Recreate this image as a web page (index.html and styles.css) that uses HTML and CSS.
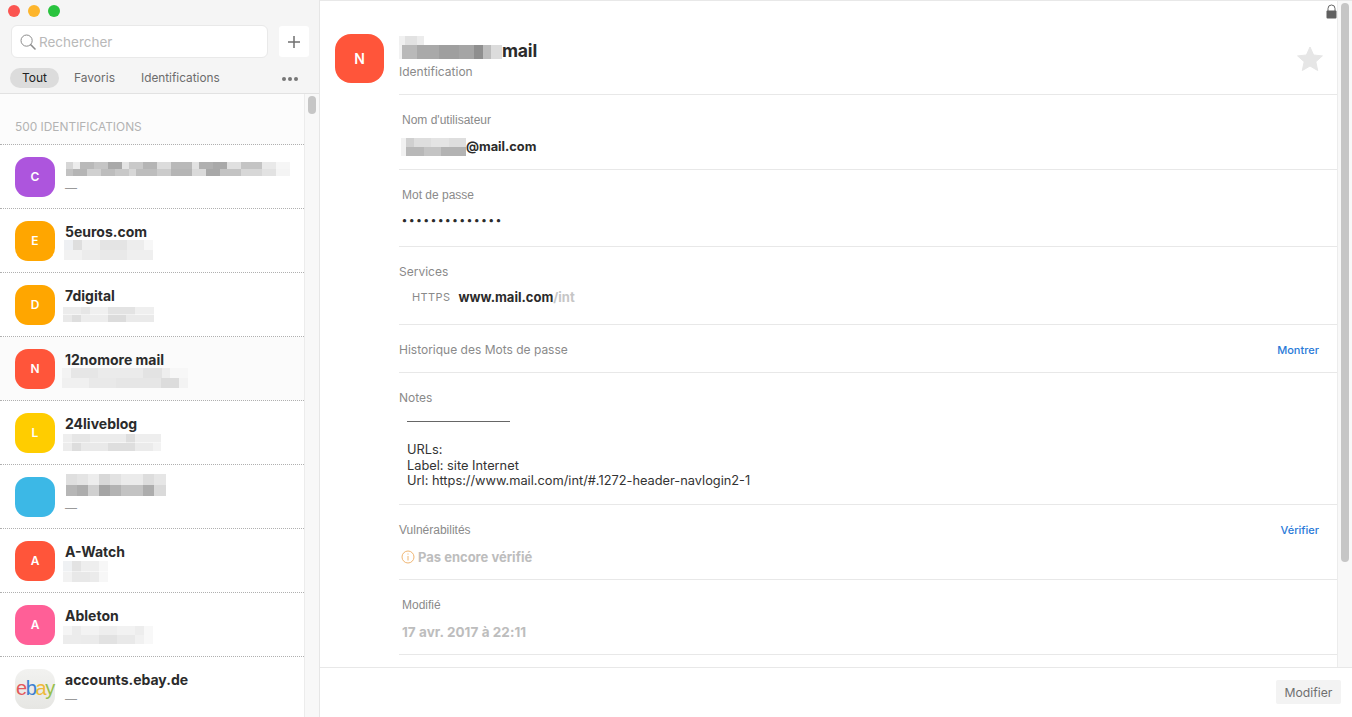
FILE: index.html
```html
<!DOCTYPE html>
<html lang="fr">

<head>
    <meta charset="UTF-8">
    <meta name="viewport" content="width=device-width, initial-scale=1.0">
    <title>Identifications</title>
    <link rel="stylesheet" href="styles.css">
</head>

<body>
    <div class="app">
        <div class="sidebar">
            <div class="toolbar">
                <div class="lights">
                    <span class="light red"></span>
                    <span class="light yellow"></span>
                    <span class="light green"></span>
                </div>
                <div class="search-row">
                    <div class="search">
                        <svg width="16" height="16" viewBox="0 0 16 16" fill="none" stroke="#8c8c8c">
                            <circle cx="6.6" cy="6.6" r="5.6" stroke-width="1" />
                            <path d="M10.8 10.8 L15 15" stroke-width="1.6" stroke-linecap="round" />
                        </svg>
                        <span>Rechercher</span>
                    </div>
                    <div class="add">
                        <svg width="12" height="12" viewBox="0 0 12 12" stroke="#707070" stroke-width="1.5">
                            <path d="M6 0 V12 M0 6 H12" />
                        </svg>
                    </div>
                </div>
                <div class="tabs">
                    <span class="tab active">Tout</span>
                    <span class="tab tab-fav">Favoris</span>
                    <span class="tab tab-ids">Identifications</span>
                    <span class="more"><i></i><i></i><i></i></span>
                </div>
            </div>
            <div class="list-wrap">
                <div class="list">
                    <div class="list-head">500 IDENTIFICATIONS</div>

                    <div class="row">
                        <div class="badge purple">C</div>
                        <div class="row-text">
                            <div class="mosaic m-first"></div>
                            <div class="dash">—</div>
                        </div>
                    </div>
                    <div class="row">
                        <div class="badge orange">E</div>
                        <div class="row-text">
                            <div class="row-title">5euros.com</div>
                            <div class="mosaic m-euros"></div>
                        </div>
                    </div>
                    <div class="row">
                        <div class="badge orange">D</div>
                        <div class="row-text">
                            <div class="row-title">7digital</div>
                            <div class="mosaic m-digital"></div>
                        </div>
                    </div>
                    <div class="row selected">
                        <div class="badge red-orange">N</div>
                        <div class="row-text">
                            <div class="row-title">12nomore mail</div>
                            <div class="mosaic m-nomore"></div>
                        </div>
                    </div>
                    <div class="row">
                        <div class="badge yellow-badge">L</div>
                        <div class="row-text">
                            <div class="row-title">24liveblog</div>
                            <div class="mosaic m-live"></div>
                        </div>
                    </div>
                    <div class="row">
                        <div class="badge blue"></div>
                        <div class="row-text">
                            <div class="mosaic m-blank"></div>
                            <div class="dash dash-low">—</div>
                        </div>
                    </div>
                    <div class="row">
                        <div class="badge red-orange">A</div>
                        <div class="row-text">
                            <div class="row-title">A-Watch</div>
                            <div class="mosaic m-watch"></div>
                        </div>
                    </div>
                    <div class="row">
                        <div class="badge pink">A</div>
                        <div class="row-text">
                            <div class="row-title">Ableton</div>
                            <div class="mosaic m-ableton"></div>
                        </div>
                    </div>
                    <div class="row">
                        <div class="badge ebay"><span class="e">e</span><span class="b">b</span><span class="a">a</span><span class="y">y</span></div>
                        <div class="row-text">
                            <div class="row-title">accounts.ebay.de</div>
                            <div class="dash">—</div>
                        </div>
                    </div>
                </div>
                <div class="track list-track"><div class="thumb list-thumb"></div></div>
            </div>
        </div>

        <div class="detail">
            <svg class="lock" width="11" height="15" viewBox="0 0 11 15">
                <path d="M2 7 V4.5 a3.5 3.5 0 0 1 7 0 V7" fill="none" stroke="#666" stroke-width="1" />
                <rect x="0.5" y="6.5" width="10" height="8" rx="1" fill="#5f5f5f" />
            </svg>
            <div class="detail-body">
                <div class="avatar-col">
                    <div class="badge badge-big red-orange">N</div>
                </div>
                <div class="fields">
                    <div class="head">
                        <div>
                            <div class="head-title">
                                <div class="mosaic m-title"></div>
                                <span>mail</span>
                            </div>
                            <div class="head-sub">Identification</div>
                        </div>
                        <svg class="star" width="26" height="26" viewBox="0 0 26 26">
                            <path d="M13 1 L16.6 9 L25.4 9.9 L18.8 15.8 L20.7 24.5 L13 20 L5.3 24.5 L7.2 15.8 L0.6 9.9 L9.4 9 Z" fill="#e6e6e6" stroke="#e6e6e6" stroke-linejoin="round" />
                        </svg>
                    </div>

                    <div class="field field-user inset">
                        <div class="label">Nom d'utilisateur</div>
                        <div class="value user-value">
                            <div class="mosaic m-user"></div>
                            <span>@mail.com</span>
                        </div>
                    </div>
                    <div class="field field-pass inset">
                        <div class="label">Mot de passe</div>
                        <div class="value dots">••••••••••••••</div>
                    </div>
                    <div class="field field-services">
                        <div class="label">Services</div>
                        <div class="value service">
                            <span class="proto">HTTPS</span>
                            <span>www.mail.com<span class="path">/int</span></span>
                        </div>
                    </div>
                    <div class="field field-history">
                        <div class="label-row">
                            <div class="label">Historique des Mots de passe</div>
                            <a class="link">Montrer</a>
                        </div>
                    </div>
                    <div class="field field-notes">
                        <div class="label">Notes</div>
                        <div class="note-rule"></div>
                        <div class="note">URLs:<br>Label: site Internet<br>Url: https://www.mail.com/int/#.1272-header-navlogin2-1</div>
                    </div>
                    <div class="field field-vuln">
                        <div class="label-row">
                            <div class="label">Vulnérabilités</div>
                            <a class="link">Vérifier</a>
                        </div>
                        <div class="value muted vuln">
                            <svg width="14" height="14" viewBox="0 0 14 14" fill="none" stroke="#f0b673">
                                <circle cx="7" cy="7" r="6" />
                                <path d="M7 3.5 V4.6 M7 6 V10.5" />
                            </svg>
                            Pas encore vérifié
                        </div>
                    </div>
                    <div class="field field-mod inset">
                        <div class="label">Modifié</div>
                        <div class="value muted mod-value">17 avr. 2017 à 22:11</div>
                    </div>
                </div>
                <div class="track detail-track"><div class="thumb detail-thumb"></div></div>
            </div>
            <div class="footer">
                <button class="edit">Modifier</button>
            </div>
        </div>
    </div>
</body>

</html>
```

FILE: styles.css
```css
* {
    box-sizing: border-box;
}

html,
body {
    margin: 0;
    height: 100%;
    overflow: hidden;
    background: #fff;
    font-family: Inter, "Liberation Sans", sans-serif;
    color: #2b2b2b;
}

.app {
    display: flex;
    height: 100vh;
}

/* sidebar */
.sidebar {
    width: 320px;
    flex: none;
    display: flex;
    flex-direction: column;
    border-right: 1px solid #e6e6e6;
}

.toolbar {
    height: 94px;
    flex: none;
    background: #f5f5f5;
    border-bottom: 1px solid #e2e2e2;
}

.lights {
    display: flex;
    gap: 8px;
    padding: 5px 0 0 8px;
}

.light {
    width: 12px;
    height: 12px;
    border-radius: 50%;
}

.light.red {
    background: #fb5551;
}

.light.yellow {
    background: #fdb52c;
}

.light.green {
    background: #29c33e;
}

.search-row {
    display: flex;
    gap: 11px;
    padding: 8px 0 0 11px;
}

.search {
    width: 257px;
    height: 33px;
    background: #fff;
    border: 1px solid #e9e9e9;
    border-radius: 6px;
    display: flex;
    align-items: center;
    gap: 3px;
    padding-left: 8px;
    font-size: 13.5px;
    color: #b9b9b9;
}

.add {
    width: 30px;
    height: 31px;
    margin-top: 1px;
    background: #fff;
    border-radius: 3px;
    display: flex;
    align-items: center;
    justify-content: center;
}

.tabs {
    display: flex;
    align-items: center;
    height: 20px;
    margin-top: 10px;
    padding-left: 10px;
    font-size: 12px;
    color: #6c6c6c;
}

.tab {
    line-height: 20px;
}

.tab.active {
    width: 49px;
    text-align: center;
    background: #dcdcdc;
    border-radius: 10px;
    color: #222;
}

.tab-fav {
    margin-left: 15px;
}

.tab-ids {
    margin-left: 26px;
    font-size: 11.8px;
}

.more {
    display: flex;
    gap: 2px;
    margin-left: 62px;
    margin-top: 2px;
}

.more i {
    width: 4px;
    height: 4px;
    border-radius: 50%;
    background: #777;
}

.list-wrap {
    flex: 1;
    display: flex;
    min-height: 0;
}

.list {
    width: 304px;
    flex: none;
    overflow: hidden;
    background: #fff;
}

.list-head {
    height: 51px;
    padding: 26px 0 0 15px;
    line-height: 14px;
    font-size: 11.9px;
    color: #b3b3b3;
    border-bottom: 1px dotted #b0b0b0;
    background: #fcfcfc;
}

.row {
    height: 64px;
    display: flex;
    align-items: center;
    padding-left: 15px;
    border-bottom: 1px dotted #b0b0b0;
}

.row.selected {
    background: #fbfbfb;
}

.row-text {
    margin-left: 10px;
    height: 63px;
    padding-top: 15px;
}

.row-title {
    font-size: 14px;
    font-weight: 700;
    line-height: 16px;
    color: #2b2b2b;
    white-space: nowrap;
}

.dash {
    margin-top: 3px;
    font-size: 12px;
    line-height: 16px;
    color: #9a9a9a;
}

.m-first + .dash {
    margin-top: 4px;
}

.m-blank + .dash-low {
    margin-top: 4px;
}

.badge {
    width: 40px;
    height: 40px;
    flex: none;
    border-radius: 13px;
    display: flex;
    align-items: center;
    justify-content: center;
    color: #fff;
    font-size: 12px;
    font-weight: 600;
}

.badge-big {
    width: 49px;
    height: 49px;
    border-radius: 16px;
    font-size: 14px;
}

.purple {
    background: #ad55dd;
}

.orange {
    background: #ffa600;
}

.red-orange {
    background: #ff553a;
}

.yellow-badge {
    background: #ffcd00;
}

.blue {
    background: #3cb8e6;
}

.pink {
    background: #ff5f97;
}

.ebay {
    background: linear-gradient(#f2f2f0, #e6e6e3);
    font-family: "Liberation Sans", sans-serif;
    font-size: 20px;
    font-weight: 400;
    letter-spacing: -1.4px;
}

.ebay .e {
    color: #e4595c;
}

.ebay .b {
    color: #3d80d0;
}

.ebay .a {
    color: #efb93a;
}

.ebay .y {
    color: #97c04a;
}

.track {
    flex: none;
    background: #f8f8f8;
    border-left: 1px solid #ececec;
}

.list-track {
    width: 15px;
    padding: 2px 0 0 3px;
}

.thumb {
    background: #c6c6c6;
    border-radius: 4px;
}

.list-thumb {
    width: 8px;
    height: 18px;
}

/* blurred out text */
.mosaic {
    background-repeat: no-repeat;
    background-size: 100% 50%;
    background-position: top, bottom;
    flex: none;
}

.m-first {
    width: 224px;
    height: 14px;
    margin: 2px 0 0 1px;
    background-image:
        linear-gradient(90deg, #d6d6d6 0 7px, #ececec 0 14px, #b9b9b9 0 28px, #c5c5c5 0 42px, #a9a9a9 0 56px, #e4e4e4 0 63px, #c9c9c9 0 77px, #b5b5b5 0 91px, #dcdcdc 0 105px, #b9b9b9 0 126px, #e2e2e2 0 133px, #b0b0b0 0 147px, #a9a9a9 0 161px, #e0e0e0 0 175px, #c4c4c4 0 196px, #e9e9e9 0 210px, #f6f6f6 0 224px),
        linear-gradient(90deg, #c2c2c2 0 7px, #b5b5b5 0 21px, #d0d0d0 0 35px, #bdbdbd 0 49px, #c8c8c8 0 63px, #d7d7d7 0 70px, #bdbdbd 0 91px, #cbcbcb 0 105px, #b5b5b5 0 126px, #dadada 0 140px, #a8a8a8 0 154px, #c3c3c3 0 175px, #d7d7d7 0 196px, #e2e2e2 0 210px, #f4f4f4 0 224px);
}

.m-euros {
    width: 89px;
    height: 20px;
    margin-left: -1px;
    background-image:
        linear-gradient(90deg, #eef0f3 0 9px, #dedede 0 18px, #efefef 0 36px, #e4e4e4 0 63px, #ededed 0 80px, #f7f7f7 0 89px),
        linear-gradient(90deg, #f2f2f2 0 18px, #ececec 0 36px, #e9e9e9 0 63px, #efefef 0 89px);
}

.m-digital {
    width: 91px;
    height: 15px;
    margin: 3px 0 0 -2px;
    background-image:
        linear-gradient(90deg, #ececec 0 18px, #e6e6e6 0 27px, #f0f0f0 0 45px, #e3e3e3 0 72px, #efefef 0 91px),
        linear-gradient(90deg, #e9e9e9 0 9px, #dedede 0 18px, #ededed 0 45px, #dcdcdc 0 63px, #eaeaea 0 91px);
}

.m-nomore {
    width: 126px;
    height: 20px;
    margin-top: 0;
    margin-left: -3px;
    background-image:
        linear-gradient(90deg, #f3f3f3 0 9px, #e6e6e6 0 36px, #ebebeb 0 81px, #e3e3e3 0 100px, #eeeeee 0 108px, #f7f7f7 0 126px),
        linear-gradient(90deg, #f0f0f0 0 27px, #e9e9e9 0 54px, #e6e6e6 0 99px, #dcdcdc 0 117px, #f3f3f3 0 126px);
}

.m-live {
    width: 98px;
    height: 17px;
    margin: 2px 0 0 -2px;
    background-image:
        linear-gradient(90deg, #eeeeee 0 9px, #e6e6e6 0 27px, #ececec 0 63px, #dedede 0 72px, #eeeeee 0 98px),
        linear-gradient(90deg, #ececec 0 9px, #dddddd 0 18px, #e9e9e9 0 45px, #dedede 0 72px, #ebebeb 0 90px, #f2f2f2 0 98px);
}

.m-blank {
    width: 100px;
    height: 22px;
    margin: -6px 0 0 1px;
    background-image:
        linear-gradient(90deg, #dfdfdf 0 11px, #e4e4e4 0 22px, #ededed 0 33px, #d8d8d8 0 44px, #e2e2e2 0 55px, #ebebeb 0 77px, #dddddd 0 88px, #e6e6e6 0 100px),
        linear-gradient(90deg, #b6b6b6 0 11px, #adadad 0 22px, #d0d0d0 0 33px, #a5a5a5 0 44px, #b3b3b3 0 55px, #c3c3c3 0 77px, #adadad 0 88px, #dadada 0 100px);
}

.m-watch {
    width: 45px;
    height: 21px;
    margin-top: 1px;
    margin-left: -2px;
    background-image:
        linear-gradient(90deg, #eff1f3 0 9px, #e3e3e3 0 18px, #eeeeee 0 36px, #f7f7f7 0 45px),
        linear-gradient(90deg, #f2f2f2 0 9px, #e8e8e8 0 27px, #ebebeb 0 36px, #f7f7f7 0 45px);
}

.m-ableton {
    width: 90px;
    height: 18px;
    margin: 2px 0 0 -2px;
    background-image:
        linear-gradient(90deg, #f5f5f5 0 9px, #ececec 0 18px, #f3f3f3 0 36px, #eeeeee 0 54px, #f2f2f2 0 72px, #ededed 0 81px, #f8f8f8 0 90px),
        linear-gradient(90deg, #ececec 0 18px, #ebebeb 0 36px, #e2e2e2 0 54px, #e9e9e9 0 72px, #f1f1f1 0 81px, #f8f8f8 0 90px);
}

.m-title {
    width: 103px;
    height: 23px;
    background-size: 100% 9px, 100% 14px;
    background-image:
        linear-gradient(90deg, #f0f0f0 0 6px, #e2e2e2 0 18px, #ececec 0 25px, #fff 0 103px),
        linear-gradient(90deg, #f2f2f2 0 3px, #b9b9b9 0 18px, #a9a9a9 0 40px, #9f9f9f 0 60px, #a5a5a5 0 75px, #8f8f8f 0 84px, #bdbdbd 0 92px, #dcdcdc 0 103px);
}

.m-user {
    width: 65px;
    height: 18px;
    margin-left: -1px;
    background-image:
        linear-gradient(90deg, #f1f1f1 0 5px, #d0d0d0 0 13px, #dedede 0 30px, #e4e4e4 0 48px, #dedede 0 65px),
        linear-gradient(90deg, #f1f1f1 0 5px, #b8b8b8 0 23px, #c4c4c4 0 40px, #b3b3b3 0 65px);
}

/* detail pane */
.detail {
    flex: 1;
    min-width: 0;
    position: relative;
    display: flex;
    flex-direction: column;
    border-top: 1px solid #e8e8e8;
}

.lock {
    position: absolute;
    top: 3px;
    right: 15px;
}

.detail-body {
    flex: 1;
    display: flex;
    min-height: 0;
    border-bottom: 1px solid #e8e8e8;
}

.avatar-col {
    width: 79px;
    flex: none;
    padding: 33px 0 0 15px;
}

.fields {
    flex: 1;
    min-width: 0;
}

.head {
    height: 94px;
    display: flex;
    justify-content: space-between;
    border-bottom: 1px solid #e8e8e8;
    padding: 35px 14px 0 0;
}

.head-title {
    display: flex;
    height: 23px;
    font-size: 17.6px;
    font-weight: 700;
    line-height: 23px;
    letter-spacing: -0.2px;
}

.head-title span {
    margin-top: 3px;
}

.head-sub {
    margin-top: 3px;
    font-size: 12px;
    line-height: 20px;
    color: #8a8a8a;
}

.star {
    margin-top: 10px;
}

.field {
    padding-top: 17px;
    border-bottom: 1px solid #e8e8e8;
}

.inset {
    padding-left: 3px;
}

.field-user {
    height: 75px;
}

.field-pass {
    height: 77px;
}

.field-services {
    height: 78px;
}

.field-history {
    height: 48px;
}

.field-notes {
    height: 132px;
}

.field-vuln {
    height: 75px;
}

.field-mod {
    height: 75px;
}

.label {
    font-size: 12px;
    line-height: 16px;
    color: #8a8a8a;
}

.inset .label,
.field-vuln .label {
    font-family: "Liberation Sans", sans-serif;
}

.label-row {
    display: flex;
    justify-content: space-between;
    padding-right: 18px;
}

.link {
    font-size: 11px;
    font-weight: 500;
    line-height: 16px;
    color: #2a7ad8;
}

.value {
    margin-top: 10px;
    font-size: 12.8px;
    font-weight: 700;
    line-height: 16px;
    color: #2b2b2b;
}

.user-value {
    display: flex;
    align-items: center;
}

.dots {
    font-size: 10.5px;
    letter-spacing: 2.25px;
}

.service {
    margin-top: 9px;
    padding-left: 13px;
    display: flex;
    align-items: center;
    gap: 8px;
    font-size: 13px;
}

.proto {
    font-size: 11px;
    font-weight: 400;
    color: #8a8a8a;
    letter-spacing: 0.4px;
}

.path {
    color: #c6c6c6;
}

.note-rule {
    width: 103px;
    height: 1px;
    margin: 15px 0 0 8px;
    background: #666;
}

.note {
    margin: 20px 0 0 8px;
    font-size: 12.8px;
    line-height: 15.7px;
    color: #333;
}

.muted {
    color: #bdbdbd;
}

.vuln {
    display: flex;
    align-items: center;
    gap: 3px;
    margin: 11px 0 0 2px;
    font-size: 13px;
}

.mod-value {
    margin-top: 11px;
    font-size: 13.5px;
    letter-spacing: 0.05px;
}

.detail-track {
    width: 15px;
    padding: 2px 0 0 3px;
}

.detail-thumb {
    width: 8px;
    height: 559px;
}

.footer {
    height: 49px;
    flex: none;
    display: flex;
    justify-content: flex-end;
    padding: 12px 11px 0 0;
}

.edit {
    width: 65px;
    height: 24px;
    border: 0;
    border-radius: 2px;
    background: #f3f3f3;
    font-family: inherit;
    font-size: 12.2px;
    color: #6f6f6f;
}
```
